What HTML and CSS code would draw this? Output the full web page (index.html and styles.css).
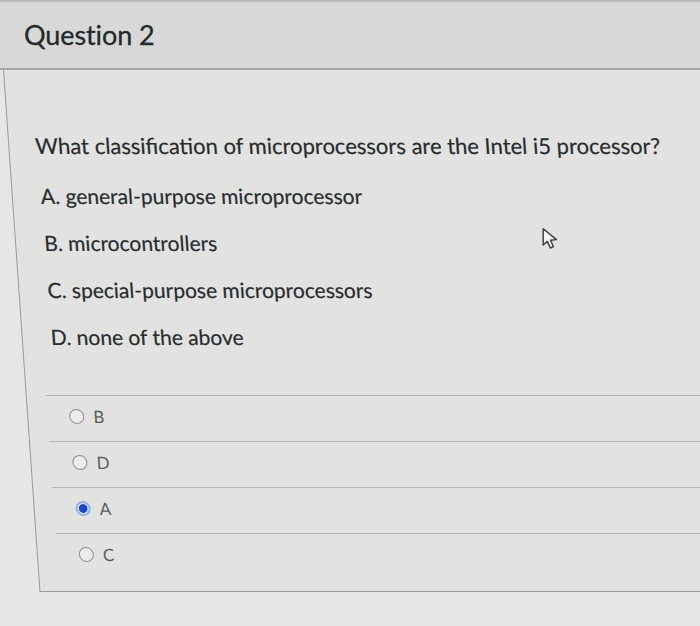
FILE: index.html
```html
<!DOCTYPE html>
<html>
<head>
<meta charset="utf-8">
<link rel="stylesheet" href="styles.css">
</head>
<body>
<div class="page">
  <div class="header"><h2 class="title">Question 2</h2></div>
  <div class="content">
    <p class="question">What classification of microprocessors are the Intel i5 processor?</p>
    <p class="choice">A. general-purpose microprocessor</p>
    <p class="choice">B. microcontrollers</p>
    <p class="choice">C. special-purpose microprocessors</p>
    <p class="choice">D. none of the above</p>
    <div class="answers">
      <label class="ans"><span class="radio"></span>B</label>
      <label class="ans"><span class="radio"></span>D</label>
      <label class="ans"><span class="radio on"></span>A</label>
      <label class="ans"><span class="radio"></span>C</label>
    </div>
  </div>
  <svg class="cursor" width="20" height="24" viewBox="0 0 16 20"><path d="M1.5 1.5 L1.5 15 L5 12 L7.5 17.5 L10 16.3 L7.6 11 L12.5 10.5 Z" fill="#f4f4f2" stroke="#3a3d3f" stroke-width="1.2" stroke-linejoin="round"/></svg>
</div>
</body>
</html>
```
FILE: styles.css
```css
html, body { margin: 0; padding: 0; }
body { background: #e6e7e5; font-family: Lato, "Open Sans", sans-serif; color: #2f3437; }
.page { position: relative; width: 700px; height: 626px; overflow: hidden; background: #e6e7e5; }
.header { height: 66px; background: #d8d9d7; border-top: 2px solid #b9bab8; border-bottom: 2px solid #a8a9a7; display: flex; align-items: center; padding-left: 24px; }
.title { margin: 0; font-weight: 400; font-size: 27px; line-height: 32px; color: #24292c; letter-spacing: -0.1px; -webkit-text-stroke: 0.3px #24292c; }
.content { height: 522px; border-left: 1px solid #9a9b99; border-bottom: 1px solid #9a9b99; margin-left: 3px; transform: skewX(4deg); transform-origin: top left; background: #e2e3e1; padding-top: 62px; box-sizing: border-box; }
.question { margin: 0 0 24px 26px; font-size: 22px; line-height: 27px; color: #272c2f; -webkit-text-stroke: 0.2px #272c2f; }
.choice { margin: 0 0 21px 28px; font-size: 21px; line-height: 26px; color: #272c2f; -webkit-text-stroke: 0.2px #272c2f; }
.answers { margin: 45px 0 0 19px; display: flex; flex-direction: column; }
.ans { display: flex; align-items: center; gap: 9px; height: 46px; padding-bottom: 5px; box-sizing: border-box; border-top: 1px solid #b5b6b4; font-size: 17px; color: #5a5e60; padding-left: 22px; }
.radio { width: 15px; height: 15px; border: 1.5px solid #8d8f90; border-radius: 50%; background: #ecedeb; box-sizing: border-box; }
.radio.on { border: 2px solid #8fb0ea; background: radial-gradient(circle, #1d47d0 0 4px, #dde6f7 4.6px); }
.cursor { position: absolute; left: 541px; top: 227px; }
```
